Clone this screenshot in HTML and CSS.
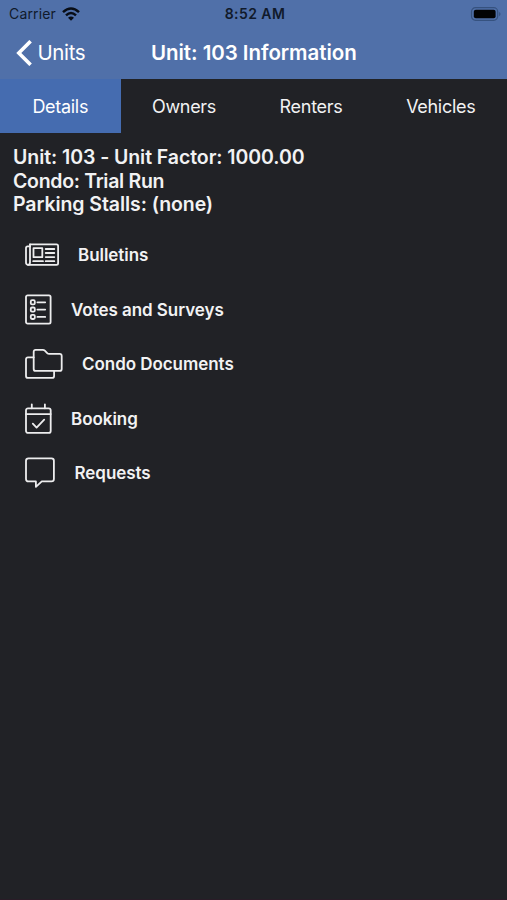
FILE: index.html
```html
<!DOCTYPE html>
<html lang="en">
<head>
<meta charset="utf-8">
<title>Unit: 103 Information</title>
<link rel="stylesheet" href="styles.css">
</head>
<body>
<header class="header">
  <div class="status">
    <div class="carrier"><span class="carrier-name">Carrier</span>
      <svg class="wifi" width="18" height="14" viewBox="0 0 18 14"><g fill="none" stroke="#080d16" stroke-width="2.5"><path d="M1 5.2Q9-2.2 17 5.2"/><path d="M4 8.4Q9 3.7 14 8.4"/></g><path d="M6 10.7Q9 8.2 12 10.7L9 13.8Z" fill="#080d16"/></svg>
    </div>
    <time class="clock">8:52 AM</time>
    <svg class="battery" width="31" height="14" viewBox="0 0 31 14"><rect x="1.5" y=".7" width="26.2" height="12.6" rx="4" fill="none" stroke="#36527f" stroke-width="1.2"/><rect x="3.8" y="2.7" width="21.8" height="8.6" rx="2" fill="#020305"/><path d="M29.2 4.7q2.6 2.3 0 4.6z" fill="#36527f"/></svg>
  </div>
  <nav class="navbar">
    <a class="back"><svg width="16" height="26" viewBox="0 0 16 26"><path d="M14.6 1.2 2.8 13l11.8 11.8" fill="none" stroke="#fff" stroke-width="3.6"/></svg><span class="back-label">Units</span></a>
    <h1 class="title">Unit: 103 Information</h1>
  </nav>
</header>
<div class="tabs">
  <a class="tab active"><span>Details</span></a>
  <a class="tab"><span>Owners</span></a>
  <a class="tab"><span>Renters</span></a>
  <a class="tab"><span>Vehicles</span></a>
</div>
<main class="content">
  <section class="summary">
    <p>Unit: 103 - Unit Factor: 1000.00</p>
    <p class="condo">Condo: Trial Run</p>
    <p>Parking Stalls: (none)</p>
  </section>
  <ul class="menu">
    <li><svg width="34" height="32" viewBox="0 0 34 32"><path d="M5 5.3h26.5q1.6 0 1.6 1.6v17.3q0 1.6-1.6 1.6H3.4Q1 25.8 1 23.4V8.9Q1 7.3 2.6 7.3H5"/><path d="M5 5.3v17.9q0 2.6-2 2.6M8.5 9.2h8.8v9H8.5zM20.7 10h8.6M20.7 14h8.6M20.7 18.1h8.6M20.7 22.2h8.6M8.2 22.2h9.8"/></svg><span>Bulletins</span></li>
    <li><svg width="27" height="32" viewBox="0 0 27 32"><rect x="1" y="1.3" width="24.6" height="28.4" rx="1.6"/><path d="M12.4 8.3h7.8M12.4 15.6h7.8M12.4 22.9h7.8"/><rect x="5.8" y="6.2" width="4" height="4.2" rx="1.2"/><rect x="5.8" y="13.5" width="4" height="4.2" rx="1.2"/><rect x="5.8" y="20.8" width="4" height="4.2" rx="1.2"/></svg><span>Votes and Surveys</span></li>
    <li><svg width="38" height="32" viewBox="0 0 38 32"><path d="M8.7 3.7q0-1.9 1.9-1.9h7.2q1.2 0 2 .8l2.4 2.5q.8.8 2 .8h10.5q2 0 2 2v13q0 2-2 2H10.6q-1.9 0-1.9-2z"/><path d="M8.7 9.3H3q-2 0-2 2v16.6q0 2 2 2h24.1q2 0 2-2v-5"/></svg><span>Condo Documents</span></li>
    <li><svg width="27" height="32" viewBox="0 0 27 32"><rect x="1" y="5.3" width="24.7" height="24.6" rx="2"/><path d="M1 11.1h24.7M6.8 1.3v4M19.9 1.3v4M7.8 20.6l3.8 4 7.6-8"/></svg><span>Booking</span></li>
    <li><svg width="30.5" height="32" viewBox="0 0 30.5 32"><path d="M3.5 1.4h23q2.4 0 2.4 2.4v18.2q0 2.4-2.4 2.4H16.8L10.9 29.8v-5.4H3.5Q1 24.4 1 22V3.8q0-2.4 2.5-2.4z"/></svg><span>Requests</span></li>
  </ul>
</main>
</body>
</html>
```
FILE: styles.css
```css
* { box-sizing: border-box; }
html { background: #212226; }
body { margin: 0; height: 900px; overflow: hidden; background: #212226; color: #f2f2f3; font-family: Inter, sans-serif; border-bottom: 1px solid #2a1c27; }
p, h1, ul { margin: 0; padding: 0; }
svg { display: block; flex: none; }
span, time, p { white-space: nowrap; }
.header { height: 79px; background: #5070a9; }
.status { height: 27px; padding: 0 6px 0 9px; display: grid; grid-template-columns: 1fr auto 1fr; align-items: center; color: #101a2b; font-size: 14px; }
.carrier { display: flex; align-items: center; gap: 6px; }
.carrier-name { letter-spacing: .15px; }
.clock { font-weight: 600; letter-spacing: .45px; }
.battery { justify-self: end; }
.navbar { height: 51px; display: grid; grid-template-columns: 135px auto 1fr; align-items: center; padding-left: 16px; color: #fff; }
.back { display: flex; align-items: center; gap: 5.5px; font-size: 20.5px; letter-spacing: -.4px; }
.title { font-size: 20.5px; font-weight: 600; letter-spacing: -.05px; white-space: nowrap; }
.tabs { height: 54px; display: grid; grid-template-columns: 120.5px 127px 127px 132.5px; font-size: 18px; letter-spacing: -.3px; }
.tab { display: flex; align-items: center; justify-content: center; }
.active { background: #456cb0; color: #fff; }
.content { padding: 13px 13px; }
.summary { font-size: 19.5px; font-weight: 600; line-height: 23.6px; letter-spacing: -.07px; }
.condo { letter-spacing: -.3px; }
.menu { list-style: none; margin-top: 11px; padding-left: 12px; }
.menu li { height: 54.5px; display: flex; align-items: center; gap: 19px; font-size: 17px; font-weight: 600; letter-spacing: -.05px; }
.menu svg { fill: none; stroke: #ededee; stroke-width: 1.8; stroke-linejoin: round; stroke-linecap: round; }
```
